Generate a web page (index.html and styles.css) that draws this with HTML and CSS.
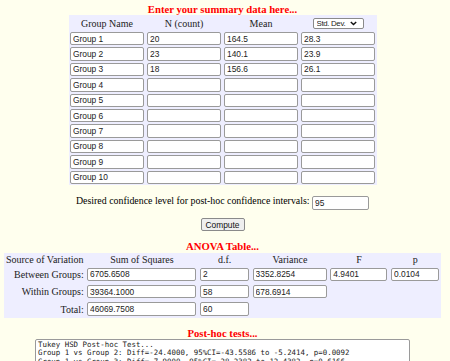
FILE: index.html
```html
<!DOCTYPE html>
<html lang="en">
<head>
    <meta charset="UTF-8">
    <title>One-Way ANOVA from Summary Data</title>
    <link rel="stylesheet" href="styles.css">
</head>
<body>
<div class="page">
    <div class="head">Enter your summary data here...</div>
    <table class="data">
        <tr class="hdr">
            <td>Group Name</td>
            <td>N (count)</td>
            <td>Mean</td>
            <td>
                <span class="selwrap">
                    <select class="sdsel">
                        <option>Std. Dev.</option>
                        <option>Std. Err.</option>
                    </select>
                    <svg class="chev" width="7" height="5" viewBox="0 0 7 5"><path d="M0.8 0.9 L3.5 3.6 L6.2 0.9" fill="none" stroke="#111" stroke-width="1.4"/></svg>
                </span>
            </td>
        </tr>
        <tr><td><input class="cell" value="Group 1"></td><td><input class="cell" value="20"></td><td><input class="cell" value="164.5"></td><td><input class="cell" value="28.3"></td></tr>
        <tr><td><input class="cell" value="Group 2"></td><td><input class="cell" value="23"></td><td><input class="cell" value="140.1"></td><td><input class="cell" value="23.9"></td></tr>
        <tr><td><input class="cell" value="Group 3"></td><td><input class="cell" value="18"></td><td><input class="cell" value="156.6"></td><td><input class="cell" value="26.1"></td></tr>
        <tr><td><input class="cell" value="Group 4"></td><td><input class="cell"></td><td><input class="cell"></td><td><input class="cell"></td></tr>
        <tr><td><input class="cell" value="Group 5"></td><td><input class="cell"></td><td><input class="cell"></td><td><input class="cell"></td></tr>
        <tr><td><input class="cell" value="Group 6"></td><td><input class="cell"></td><td><input class="cell"></td><td><input class="cell"></td></tr>
        <tr><td><input class="cell" value="Group 7"></td><td><input class="cell"></td><td><input class="cell"></td><td><input class="cell"></td></tr>
        <tr><td><input class="cell" value="Group 8"></td><td><input class="cell"></td><td><input class="cell"></td><td><input class="cell"></td></tr>
        <tr><td><input class="cell" value="Group 9"></td><td><input class="cell"></td><td><input class="cell"></td><td><input class="cell"></td></tr>
        <tr><td><input class="cell" value="Group 10"></td><td><input class="cell"></td><td><input class="cell"></td><td><input class="cell"></td></tr>
    </table>

    <div class="conf">
        Desired confidence level for post-hoc confidence intervals:
        <input class="cell conf_in" value="95">
    </div>
    <div class="btnrow"><button class="compute">Compute</button></div>

    <div class="head anova_head">ANOVA Table...</div>
    <table class="anova">
        <tr class="hdr">
            <td class="src">Source of Variation</td>
            <td>Sum of Squares</td>
            <td>d.f.</td>
            <td>Variance</td>
            <td>F</td>
            <td class="pcol">p</td>
        </tr>
        <tr>
            <td class="lbl">Between Groups:</td>
            <td><input class="cell w_ss" value="6705.6508"></td>
            <td><input class="cell w_df" value="2"></td>
            <td><input class="cell w_var" value="3352.8254"></td>
            <td><input class="cell w_f" value="4.9401"></td>
            <td><input class="cell w_p" value="0.0104"></td>
        </tr>
        <tr>
            <td class="lbl">Within Groups:</td>
            <td><input class="cell w_ss" value="39364.1000"></td>
            <td><input class="cell w_df" value="58"></td>
            <td><input class="cell w_var" value="678.6914"></td>
            <td></td>
            <td></td>
        </tr>
        <tr>
            <td class="lbl">Total:</td>
            <td><input class="cell w_ss" value="46069.7508"></td>
            <td><input class="cell w_df" value="60"></td>
            <td></td>
            <td></td>
            <td></td>
        </tr>
    </table>

    <div class="head post_head">Post-hoc tests...</div>
    <textarea class="results">Tukey HSD Post-hoc Test...
Group 1 vs Group 2: Diff=-24.4000, 95%CI=-43.5586 to -5.2414, p=0.0092
Group 1 vs Group 3: Diff=-7.9000, 95%CI=-28.2382 to 12.4382, p=0.6166
Group 2 vs Group 3: Diff=16.5000, 95%CI=-3.2669 to 36.2669, p=0.1186</textarea>
</div>
</body>
</html>
```

FILE: styles.css
```css
body{
    margin: 0;
    background-color: #ffffee;   /* cream page */
    font-family: "Liberation Serif", "Times New Roman", serif;
    color: #000;
}
.page {
    width: 445px;
    height: 361px;
    overflow: hidden;
    padding-top: 4px;
}
.head {
    color: #ff0000;
    font-weight: bold;
    font-size: 10.7px;
    text-align: center;
    line-height: 11px;
}

/* inputs */
.cell {
    box-sizing: border-box;
    width: 74px;
    height: 13.4px;
    margin: 0;
    padding: 0 2px;
    border: 1px solid #9a9a9a;
    border-radius: 2px;
    background: #fff;
    font-family: "Liberation Sans", Arial, sans-serif;
    font-size: 8.4px;
    color: #222;
    display: block;
}

/* summary data table */
.data {
    margin: 0 auto;
    border-spacing: 0;
    background-color: #eeeeff;
}
.data td {
    padding: 1px 1.5px;
}
.hdr td {
    text-align: center;
    font-size: 10px;
    height: 14px;
    color: #222;
}
.selwrap {
    position: relative;
    display: inline-block;
    vertical-align: middle;
}
.sdsel {
    -webkit-appearance: none;
    appearance: none;
    display: block;
    box-sizing: border-box;
    font-family: "Liberation Sans", Arial, sans-serif;
    font-size: 7.8px;
    letter-spacing: -0.3px;
    color: #222;
    height: 11.5px;
    width: 51px;
    padding: 0 0 0 3px;
    border: 1px solid #8a8a8a;
    border-radius: 2px;
    background: #fff;
}
.chev {
    position: absolute;
    right: 7px;
    top: 3.5px;
    pointer-events: none;
}

.conf {
    margin-top: 10px;
    text-align: center;
    font-size: 9.9px;
}
.conf_in {
    display: inline-block;
    width: 57px;
    vertical-align: -2px;
}
.btnrow {
    text-align: center;
    margin-top: 4px;
}
.compute {
    font-family: "Liberation Sans", Arial, sans-serif;
    font-size: 8.4px;
    color: #111;
    width: 44px;
    height: 13px;
    padding: 0;
    border: 1px solid #8a8a8a;
    border-radius: 2px;
    background: #efefef;
}

/* ANOVA table */
.anova_head {
    margin-top: 9px;
}
.anova {
    margin: 1px 0 0 4px;
    width: 437px;
    border-spacing: 0;
    background-color: #eeeeff;
}
.anova td {
    padding: 2px 1.6px;
    font-size: 10px;
    color: #222;
}
.anova .hdr td {
    height: 9px;
    padding-top: 1px;
    padding-bottom: 1px;
}
.anova .lbl {
    text-align: right;
    white-space: nowrap;
}
.anova .src {
    white-space: nowrap;
}
.pcol {
    vertical-align: bottom;
}
.w_ss { width: 109px; }
.w_df { width: 49px; }
.w_var { width: 74px; }
.w_f { width: 57px; }
.w_p { width: 48px; }

.post_head {
    margin-top: 10px;
}
.results {
    display: block;
    box-sizing: border-box;
    margin: 0 0 0 35px;
    width: 375px;
    height: 60px;
    padding: 1px 2px;
    border: 1px solid #9a9a9a;
    border-radius: 2px;
    font-family: "DejaVu Sans Mono", monospace;
    font-size: 7.4px;
    line-height: 8.6px;
    color: #222;
    resize: none;
}
```
